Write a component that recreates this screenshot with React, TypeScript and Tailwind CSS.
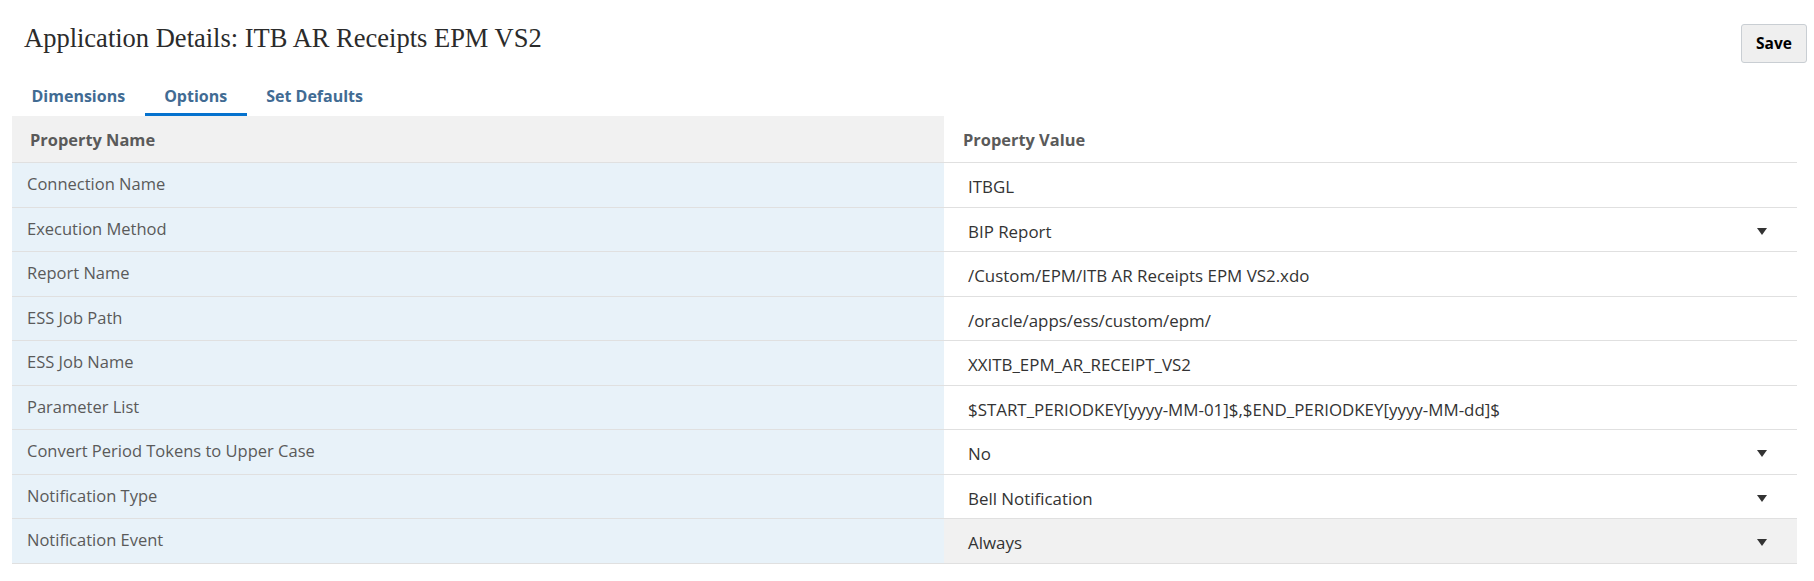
import React from 'react';

type Row = { name: string; value: string; select?: boolean; active?: boolean };

const rows: Row[] = [
  { name: 'Connection Name', value: 'ITBGL' },
  { name: 'Execution Method', value: 'BIP Report', select: true },
  { name: 'Report Name', value: '/Custom/EPM/ITB AR Receipts EPM VS2.xdo' },
  { name: 'ESS Job Path', value: '/oracle/apps/ess/custom/epm/' },
  { name: 'ESS Job Name', value: 'XXITB_EPM_AR_RECEIPT_VS2' },
  { name: 'Parameter List', value: '$START_PERIODKEY[yyyy-MM-01]$,$END_PERIODKEY[yyyy-MM-dd]$' },
  { name: 'Convert Period Tokens to Upper Case', value: 'No', select: true },
  { name: 'Notification Type', value: 'Bell Notification', select: true },
  { name: 'Notification Event', value: 'Always', select: true, active: true },
];

const tabs = ['Dimensions', 'Options', 'Set Defaults'];

const Caret = () => (
  <svg width="10" height="7" viewBox="0 0 10 7" className="shrink-0">
    <path d="M0 0 H10 L5 7 Z" fill="#333" />
  </svg>
);

export default function App() {
  return (
    <div className="w-[1814px] h-[581px] bg-white pt-[22px] font-['Open_Sans',sans-serif] overflow-hidden">
      <div className="flex justify-between items-start h-[55px] pl-[24px] pr-[7px]">
        <h1 className="font-['Liberation_Serif',serif] text-[26.5px] leading-[32px] text-[#2b2b2b]">
          Application Details: ITB AR Receipts EPM VS2
        </h1>
        <button className="mt-[2px] h-[39px] w-[66px] rounded-[3px] border border-[#c9ced3] bg-[#efefef] text-[15.5px] font-bold text-black">
          Save
        </button>
      </div>

      <div className="flex pl-[12px]">
        {tabs.map(t => (
          <div
            key={t}
            className={`px-[19.5px] pt-[7px] pb-[5px] border-b-[3px] text-[16px] leading-[24px] font-bold text-[#416b93] ${
              t === 'Options' ? 'border-[#0572ce]' : 'border-transparent'
            }`}
          >
            {t}
          </div>
        ))}
      </div>

      <div className="ml-[12px] w-[1785px]">
        <div className="flex h-[47px] border-b border-[#e0e0e0] font-bold text-[16.4px] text-[#5a5a5a]">
          <div className="w-[932px] bg-[#f1f1f1] flex items-center pl-[18px] pt-[3px]">Property Name</div>
          <div className="flex-1 flex items-center pl-[19px] pt-[3px]">Property Value</div>
        </div>
        {rows.map(r => (
          <div key={r.name} className="flex h-[44.5px] border-b border-[#e0e0e0]">
            <div className="w-[932px] bg-[#e8f2f9] flex items-center pl-[15px] text-[16.5px] text-[#5a5a5a]">{r.name}</div>
            <div
              className={`flex-1 flex items-center justify-between pl-[24px] pr-[30px] pt-[4px] text-[16.9px] text-[#333] ${
                r.active ? 'bg-[#f1f1f1]' : 'bg-white'
              }`}
            >
              <span>{r.value}</span>
              {r.select && <Caret />}
            </div>
          </div>
        ))}
      </div>
    </div>
  );
}
